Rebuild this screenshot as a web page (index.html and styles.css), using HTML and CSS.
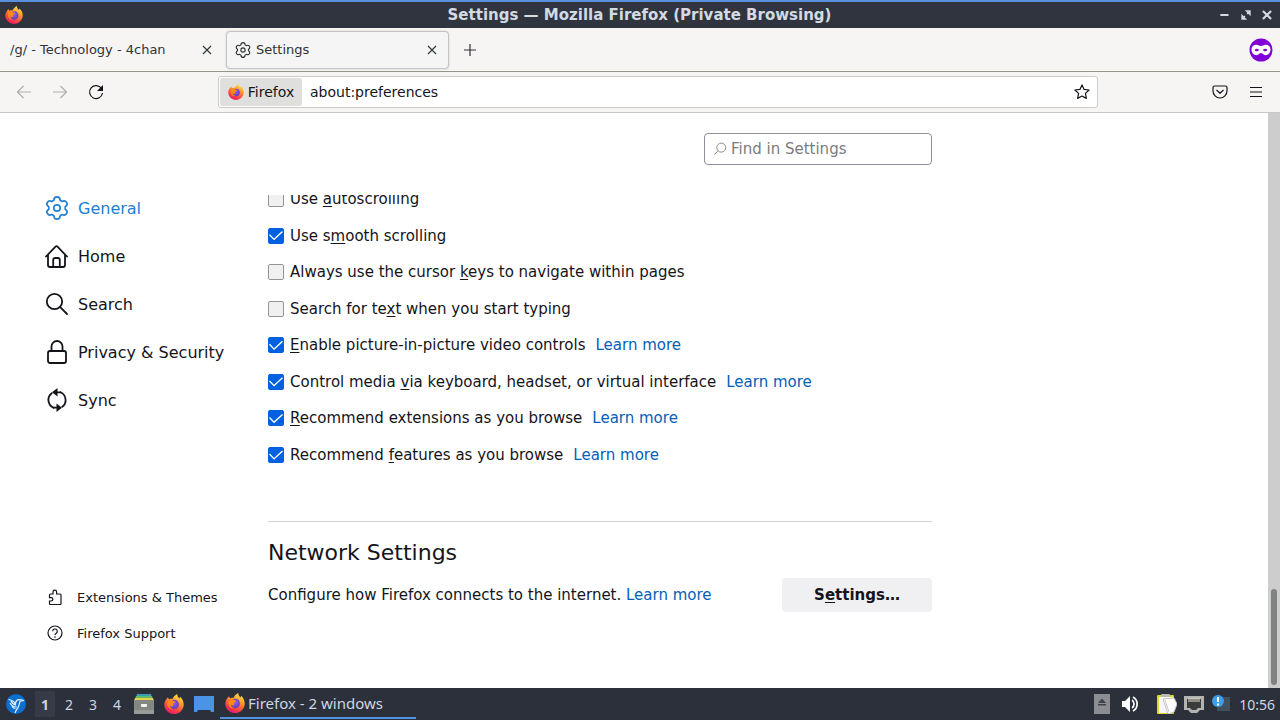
FILE: index.html
```html
<!DOCTYPE html>
<html lang="en">
<head>
  <meta charset="UTF-8" />
  <meta name="viewport" content="width=device-width, initial-scale=1.0"/>
  <title>Settings</title>
  <link rel="stylesheet" href="styles.css">
</head>
<body>

  <!-- shared icons -->
  <svg class="defs" width="0" height="0" aria-hidden="true">
    <defs>
      <linearGradient id="flame" x1="0.8" y1="0" x2="0.3" y2="1">
        <stop offset="0" stop-color="#fff04f"/>
        <stop offset="0.35" stop-color="#ffa02c"/>
        <stop offset="0.7" stop-color="#ff4a3d"/>
        <stop offset="1" stop-color="#e3156e"/>
      </linearGradient>
      <radialGradient id="globe" cx="0.5" cy="0.4" r="0.6">
        <stop offset="0" stop-color="#9059ff"/>
        <stop offset="1" stop-color="#5b3fb5"/>
      </radialGradient>
    </defs>
    <symbol id="firefox" viewBox="0 0 20 20">
      <path fill="url(#flame)" d="M4 3.200c.2 1 .6 1.700 1.200 2.100 1-.5 2.200-.6 3.200-.4C9.300 3 11 1 13.300 0c-.3 2 .9 3.200 2.300 4.400l.5-1.600c2.200 1.900 3.600 4.600 3.600 7.600 0 5.300-4.300 9.600-9.700 9.600S.3 15.700.3 10.400C.3 7.600 2.200 5 4 3.200z"/>
      <path fill="url(#globe)" d="M10.200 5.800c2.900 0 4.700 2 4.700 4.700 0 2.800-2.100 4.700-4.800 4.700s-4.700-2-4.700-4.400c0-2.800 2-5 4.800-5z"/>
      <path fill="#ff8a16" d="M4.700 6.500c1.500-.8 3.300-.6 4.500.5.600.5 1.700.4 2.300.7-.2 1-1.700 1.300-2.100 1.900-.3.800.2 2.100-.8 2.700-.9.500-2.200.1-2.900-.9.200 2.100 2 3.500 4.100 3.500-3.500.9-6.500-1.500-6.500-4.600 0-1.500.5-2.900 1.400-3.800z"/>
    </symbol>
    <symbol id="gear" viewBox="-12 -12 24 24">
      <g fill="none" stroke="currentColor" stroke-width="1.700" stroke-linejoin="round">
        <path d="M-3.100-7.700C-3-12.200 3-12.200 3.100-7.700L5.100-6.500C9.100-8.700 12.100-3.500 8.200-1.200L8.200 1.200C12.100 3.500 9.100 8.700 5.100 6.500L3.100 7.700C3 12.200-3 12.200-3.100 7.700L-5.100 6.500C-9.100 8.700-12.100 3.500-8.200 1.200L-8.200-1.200C-12.100-3.500-9.100-8.700-5.100-6.500Z"/>
        <circle r="3.200"/>
      </g>
    </symbol>
    <symbol id="close" viewBox="0 0 16 16">
      <path d="M4 4l8 8M12 4l-8 8" fill="none" stroke="currentColor" stroke-width="1.100"/>
    </symbol>
  </svg>

  <header class="titlebar">
    <svg class="app-icon"><use href="#firefox"/></svg>
    <h1>Settings — Mozilla Firefox (Private Browsing)</h1>
    <div class="window-buttons">
      <button aria-label="Minimize"><svg viewBox="0 0 12 12"><path d="M2 6h7" stroke="currentColor" stroke-width="1.700"/></svg></button>
      <button aria-label="Restore"><svg viewBox="0 0 12 12"><path d="M5 2h5v5zM2 5v5h5z" fill="currentColor"/><path d="M3 9l6-6" stroke="currentColor" stroke-width="1" stroke-dasharray="3 2.500"/></svg></button>
      <button aria-label="Close window"><svg viewBox="0 0 12 12"><path d="M2.500 2.500l7 7M9.500 2.500l-7 7" stroke="currentColor" stroke-width="1.900"/></svg></button>
    </div>
  </header>

  <div class="tabs">
    <div class="tab">
      <span>/g/ - Technology - 4chan</span>
      <button aria-label="Close tab"><svg><use href="#close"/></svg></button>
    </div>
    <div class="tab active">
      <svg><use href="#gear"/></svg>
      <span>Settings</span>
      <button aria-label="Close tab"><svg><use href="#close"/></svg></button>
    </div>
    <button class="new-tab" aria-label="New tab"><svg viewBox="0 0 16 16"><path d="M8 2v12M2 8h12" stroke="currentColor" stroke-width="1.200"/></svg></button>
    <svg class="private-icon" viewBox="0 0 24 24">
      <circle cx="12" cy="12" r="11.500" fill="#8000d7"/>
      <path fill="#fff" fill-rule="evenodd" d="M7.200 6.800c2 0 3.400 1.300 4.800 1.300s2.800-1.300 4.800-1.300c2.700 0 4.700 2 4.700 4.700 0 3.300-2.200 5.700-4.900 5.700-2.300 0-3.200-2.100-4.600-2.100s-2.300 2.100-4.600 2.100c-2.700 0-4.900-2.400-4.900-5.700 0-2.700 2-4.700 4.700-4.700zM5.500 12c1.200 1.800 3.400 1.800 4.600 0-1.200-1.600-3.400-1.600-4.600 0zm8.400 0c1.200 1.800 3.400 1.800 4.600 0-1.200-1.600-3.400-1.600-4.600 0z"/>
    </svg>
  </div>

  <div class="toolbar">
    <button disabled aria-label="Back"><svg viewBox="0 0 16 16"><path d="M7.500 2L1.500 8l6 6M1.500 8H15"/></svg></button>
    <button disabled aria-label="Forward"><svg viewBox="0 0 16 16"><path d="M8.500 2l6 6-6 6M14.500 8H1"/></svg></button>
    <button aria-label="Reload"><svg viewBox="0 0 16 16"><path d="M13.500 4.500A6.500 6.500 0 1 0 14.500 9"/><path class="solid" d="M15 1v6H9z"/></svg></button>
    <div class="urlbar">
      <button class="identity"><svg><use href="#firefox"/></svg>Firefox</button>
      <input type="text" value="about:preferences" aria-label="Address">
      <button aria-label="Bookmark this page"><svg viewBox="0 0 16 16"><path d="M8 .9l2.100 4.500 5 .6-3.700 3.400 1 5L8 12l-4.400 2.400 1-5L.9 6l5-.6z"/></svg></button>
    </div>
    <button aria-label="Save to Pocket"><svg viewBox="0 0 16 16"><path d="M2.500 2h11a1.500 1.500 0 0 1 1.500 1.500V7A7 7 0 0 1 1 7V3.500A1.500 1.500 0 0 1 2.500 2zM4.500 6L8 9.300 11.500 6"/></svg></button>
    <button aria-label="Menu"><svg viewBox="0 0 16 16"><path d="M2 3.500h12M2 8h12M2 12.500h12"/></svg></button>
  </div>

  <div class="page">
    <aside class="sidebar">
      <nav class="categories">
        <a href="#general" class="selected"><svg><use href="#gear"/></svg>General</a>
        <a href="#home"><svg viewBox="0 0 24 24"><path d="M1 12.500L10.500 2.600a1.500 1.500 0 0 1 2 0l9.500 9.900M3 10.500V21A2 2 0 0 0 5 23h13a2 2 0 0 0 2-2V10.500M8.200 23v-7a2 2 0 0 1 2-2h2.600a2 2 0 0 1 2 2v7"/></svg>Home</a>
        <a href="#search"><svg viewBox="0 0 24 24"><circle cx="9.500" cy="9.500" r="7.700"/><path d="M15.200 15.200L22 22"/></svg>Search</a>
        <a href="#privacy"><svg viewBox="0 0 24 24"><rect x="3" y="11" width="18" height="12" rx="2"/><path d="M6.500 11V6.500a5.500 5.500 0 0 1 11 0V11"/></svg>Privacy &amp; Security</a>
        <a href="#sync"><svg viewBox="0 0 24 24"><path d="M6.700 5.200A8.500 8.500 0 0 0 8.500 19.700M17.300 18.800A8.500 8.500 0 0 0 15.500 4.300"/><path class="solid" d="M12.500 0v8.600L7 4.300zM11.500 15.400V24l5.500-4.300z"/><path d="M12 4.300c1.500 0 2.500 0 3.500.1M12 19.700c-1.500 0-2.500 0-3.500-.1"/></svg>Sync</a>
      </nav>
      <nav class="footer-links">
        <a href="#addons"><svg viewBox="0 0 16 16"><path d="M3.500 5H6V3a1.800 1.800 0 0 1 3.600 0v2H13a1 1 0 0 1 1 1v8.500a1 1 0 0 1-1 1H3.500a1 1 0 0 1-1-1V12h1.700a1.600 1.600 0 0 0 0-3.300H2.500V6a1 1 0 0 1 1-1z"/></svg>Extensions &amp; Themes</a>
        <a href="#support"><svg viewBox="0 0 16 16"><circle cx="8" cy="8" r="7"/><path d="M5.700 6.300a2.300 2.300 0 1 1 3.600 1.900C8.400 8.800 8 9.200 8 10.100M8 11.300v1.400"/></svg>Firefox Support</a>
      </nav>
    </aside>

    <main class="main">
      <div class="search-row">
        <label class="search-box">
          <svg viewBox="0 0 16 16"><circle cx="8.800" cy="6" r="4.800"/><path d="M5.300 9.500L1.300 13.500"/></svg>
          <input type="search" placeholder="Find in Settings" aria-label="Find in Settings">
        </label>
      </div>

      <div class="pane">
        <div class="options">
          <div class="option"><input type="checkbox" id="autoscroll"><label for="autoscroll">Use <u>a</u>utoscrolling</label></div>
          <div class="option"><input type="checkbox" id="smooth" checked><label for="smooth">Use s<u>m</u>ooth scrolling</label></div>
          <div class="option"><input type="checkbox" id="cursor"><label for="cursor">Always use the cursor <u>k</u>eys to navigate within pages</label></div>
          <div class="option"><input type="checkbox" id="typing"><label for="typing">Search for te<u>x</u>t when you start typing</label></div>
          <div class="option"><input type="checkbox" id="pip" checked><label for="pip"><u>E</u>nable picture-in-picture video controls</label><a href="#pip-help">Learn more</a></div>
          <div class="option"><input type="checkbox" id="media" checked><label for="media">Control media <u>v</u>ia keyboard, headset, or virtual interface</label><a href="#media-help">Learn more</a></div>
          <div class="option"><input type="checkbox" id="extensions" checked><label for="extensions"><u>R</u>ecommend extensions as you browse</label><a href="#extensions-help">Learn more</a></div>
          <div class="option"><input type="checkbox" id="features" checked><label for="features">Recommend <u>f</u>eatures as you browse</label><a href="#features-help">Learn more</a></div>
        </div>

        <section class="network">
          <h2>Network Settings</h2>
          <div class="network-row">
            <p>Configure how Firefox connects to the internet. <a href="#network-help">Learn more</a></p>
            <button>S<u>e</u>ttings…</button>
          </div>
        </section>
      </div>
    </main>

    <div class="scrollbar"><div class="thumb"></div></div>
  </div>

  <footer class="taskbar">
    <button class="start" aria-label="Menu">
      <svg viewBox="0 0 20 20"><circle cx="10" cy="10" r="10" fill="#0b6fd0"/><path d="M2.500 5.500c3 .3 5.500 2 7 4.500 0-2.700 1.500-4.500 4-4.300l4.500.8-4 .7c-.7 3.800-1.500 6.500-3.700 8.800L9 19M4 9c1.800 3 4 4.200 6.800 4M6 12.500c.8 1.300 2 2 3.500 2M5 7c1.200 2.500 3 3.800 5 4" fill="none" stroke="#e6f2ff" stroke-width="1.200"/></svg>
    </button>
    <div class="desktops">
      <button class="current">1</button>
      <button>2</button>
      <button>3</button>
      <button>4</button>
    </div>
    <div class="launchers">
      <button aria-label="Files"><svg viewBox="0 0 20 20"><path d="M3 0h14l1 4H2z" fill="#3b9bb0"/><path d="M2 2h16l1 4H1z" fill="#62bd6a"/><path d="M1 4h18l1 3H0z" fill="#e8cf52"/><rect y="6" width="20" height="14" rx="1" fill="#858783"/><path d="M0 16h20v3a1 1 0 0 1-1 1H1a1 1 0 0 1-1-1z" fill="#999b98"/><rect x="7" y="10" width="6" height="3" rx="1" fill="#f4f4f4"/></svg></button>
      <button aria-label="Firefox"><svg><use href="#firefox"/></svg></button>
      <button aria-label="Show desktop"><svg viewBox="0 0 20 20"><path d="M0 2h20v16h-3l-1-2H4l-1 2H0z" fill="#4b93e6"/></svg></button>
    </div>
    <button class="task"><svg><use href="#firefox"/></svg>Firefox - 2 windows</button>
    <div class="tray">
      <svg class="eject" viewBox="0 0 16 20"><rect width="16" height="20" fill="#8b8d90"/><path d="M8 4.500l4 4.500H4zM4 10h8v1.500H4z" fill="#3e424a"/></svg>
      <svg class="volume" viewBox="0 0 20 20"><path d="M2 7h3l5-5v16l-5-5H2z" fill="#fff"/><path d="M12 6c2.700 2 2.700 6 0 8M13 3c5.500 3 5.500 11 0 14" fill="none" stroke="#fff" stroke-width="1.700"/></svg>
      <svg viewBox="0 0 20 20"><rect x="0" y="1" width="17" height="19" rx="1" fill="#ddd72a"/><rect x="2" y="3" width="14" height="16" fill="#f6f6f6"/><rect x="4" y="0" width="9" height="3" rx="1" fill="#b9bbb8"/><path d="M6 5l11-1 3 6-3 8-6 2z" fill="#fff" stroke="#c4c4c4"/><path d="M8 6l4 12" stroke="#ccc"/></svg>
      <svg viewBox="0 0 20 20"><path d="M0 2h20v14h-4l-3 3H7l-3-3H0z" fill="#b2b4b1"/><path d="M3 5h14v9h-3l-2 2H8l-2-2H3z" fill="#3a3c3b"/><path d="M5 4v4M7 4v4M9 4v4M11 4v4M13 4v4M15 4v4" stroke="#e3dfd2"/></svg>
      <svg viewBox="0 0 20 20"><rect x="6" y="3" width="13" height="14" fill="#42505b"/><circle cx="7" cy="7" r="6" fill="#3e9fe8"/><path d="M7 3v5M7 9.500v2" stroke="#fff" stroke-width="2"/></svg>
      <time>10:56</time>
    </div>
  </footer>

</body>
</html>
```
FILE: styles.css
```css
* {
  margin: 0;
  padding: 0;
  box-sizing: border-box;
}

body {
  display: flex;
  flex-direction: column;
  height: 100vh;
  overflow: hidden;
  font-family: 'DejaVu Sans', Verdana, sans-serif;
  font-size: 15px;
  color: #15141a;
  background: #ffffff;
}

button,
input {
  font: inherit;
  color: inherit;
  border: none;
  background: none;
}

button {
  display: flex;
  align-items: center;
  justify-content: center;
}

a {
  color: #0560b8;
  text-decoration: none;
}

svg {
  flex: none;
  width: 16px;
  height: 16px;
}

.defs {
  position: absolute;
  width: 0;
  height: 0;
}

u {
  text-underline-offset: 2px;
}

/* window title */
.titlebar {
  display: flex;
  align-items: center;
  height: 28px;
  padding: 0 6px 0 5px;
  border-top: 2px solid #5a8fdc;
  background: #2f343f;
  color: #d3dae3;
}

.titlebar .app-icon {
  width: 18px;
  height: 18px;
}

.titlebar h1 {
  flex: 1;
  padding-left: 38px;
  text-align: center;
  font-size: 15px;
  line-height: 26px;
}

.window-buttons {
  display: flex;
  gap: 7px;
}

.window-buttons svg {
  width: 14px;
  height: 14px;
}

/* tab strip */
.tabs {
  display: flex;
  align-items: center;
  height: 44px;
  border-bottom: 1px solid #94958c;
  background: #f6f5f4;
  font-size: 13px;
  color: #2e3436;
}

.tab {
  display: flex;
  align-items: center;
  gap: 5px;
  width: 223px;
  height: 38px;
  padding: 0 8px;
  border: 1px solid transparent;
  border-radius: 4px;
}

.tab span {
  flex: 1;
  white-space: nowrap;
}

.tab:first-child {
  width: 225px;
  padding-left: 9px;
  margin-right: 1px;
}

.tab:first-child button {
  margin-right: 1px;
}

.tab.active {
  border-color: #c3c3c8;
  box-shadow: 0 0 2px rgba(0, 0, 0, 0.2);
  background: #f6f5f5;
}

.new-tab {
  width: 42px;
}

.private-icon {
  width: 24px;
  height: 24px;
  margin-left: auto;
  margin-right: 7px;
}

/* navigation bar */
.toolbar {
  display: flex;
  align-items: center;
  height: 41px;
  padding: 0 6px;
  border-bottom: 1px solid #c8c8c6;
  background: #f6f5f4;
  font-size: 14px;
}

.toolbar button {
  width: 36px;
  height: 32px;
}

.toolbar button:disabled {
  color: #aeafae;
}

.toolbar path {
  fill: none;
  stroke: currentColor;
  stroke-width: 1.2;
  stroke-linejoin: round;
}

.toolbar .solid {
  fill: currentColor;
  stroke: none;
}

.urlbar {
  display: flex;
  align-items: center;
  flex: 1;
  height: 32px;
  margin: 0 104px;
  border: 1px solid #cbcbc9;
  border-radius: 3px;
  background: #ffffff;
}

.urlbar button {
  width: 30px;
}

.urlbar .identity {
  gap: 4px;
  width: 82px;
  height: 28px;
  margin-left: 1px;
  border-radius: 3px;
  background: #dfdfde;
}

.urlbar input {
  flex: 1;
  min-width: 0;
  padding: 0 8px;
  outline: none;
}

/* settings page */
.page {
  display: flex;
  flex: 1;
  min-height: 0;
}

.sidebar {
  display: flex;
  flex-direction: column;
  justify-content: space-between;
  flex: 0 0 268px;
  padding: 71px 0 37px 45px;
}

.sidebar a {
  display: flex;
  align-items: center;
  color: #15141a;
}

.sidebar svg {
  fill: none;
  stroke: currentColor;
}

.sidebar .solid {
  fill: currentColor;
  stroke: none;
}

.categories a {
  gap: 9px;
  height: 48px;
  font-size: 16px;
}

.categories svg {
  width: 24px;
  height: 24px;
  stroke-width: 1.8;
  stroke-linecap: round;
}

.categories .selected {
  color: #2180d8;
}

.footer-links {
  padding-left: 2px;
}

.footer-links a {
  gap: 14px;
  height: 36px;
  font-size: 13px;
}

.footer-links svg {
  stroke-width: 1.2;
}

.main {
  display: flex;
  flex-direction: column;
  flex: 0 1 664px;
}

.search-row {
  display: flex;
  justify-content: flex-end;
  padding: 20px 0 30px;
}

.search-box {
  display: flex;
  align-items: center;
  gap: 3px;
  width: 228px;
  height: 32px;
  padding: 0 8px;
  border: 1px solid #8f8f9d;
  border-radius: 4px;
}

.search-box svg {
  width: 15px;
  height: 15px;
  fill: none;
  stroke: #85858c;
}

.search-box input {
  flex: 1;
  min-width: 0;
  outline: none;
}

.search-box input::placeholder {
  color: #7b7b80;
}

/* the pane is scrolled to its end, so rows are cut at the top */
.pane {
  display: flex;
  flex-direction: column;
  justify-content: flex-end;
  flex: 1;
  min-height: 0;
  padding-bottom: 76px;
  overflow: hidden;
}

.options {
  display: flex;
  flex-direction: column;
  flex: none;
  justify-content: space-between;
  height: 272px;
}

.option {
  display: flex;
  align-items: center;
  height: 16px;
  line-height: 20px;
  white-space: nowrap;
}

.option label {
  margin: 0 10px 0 6px;
}

.option input {
  appearance: none;
  width: 16px;
  height: 16px;
  border: 1px solid #949498;
  border-radius: 2px;
  background: #f0f0f1;
}

.option input:checked {
  border-color: #0061e0;
  background: #0061e0;
}

.option input:checked::before {
  content: '';
  display: block;
  width: 14px;
  height: 14px;
  background: #ffffff;
  clip-path: polygon(0 47%, 7% 40%, 36% 71%, 93% 18%, 100% 25%, 36% 84%);
}

.network {
  flex: none;
  margin-top: 58px;
  border-top: 1px solid #d0d3d4;
}

.network h2 {
  padding: 18px 0 12px;
  font-size: 22px;
  line-height: 26px;
  font-weight: normal;
}

.network-row {
  display: flex;
  align-items: center;
  justify-content: space-between;
}

.network-row button {
  display: block;
  width: 150px;
  height: 34px;
  border-radius: 4px;
  background: #f0f0f2;
  font-weight: bold;
}

.scrollbar {
  display: flex;
  align-items: flex-end;
  justify-content: center;
  width: 12px;
  margin-left: auto;
  padding-bottom: 3px;
  background: #cdcdcd;
}

.thumb {
  width: 6px;
  height: 96px;
  border-radius: 3px;
  background: #7f8382;
}

/* desktop panel */
.taskbar {
  display: flex;
  align-items: center;
  height: 32px;
  padding: 0 5px 0 6px;
  background: #2b303b;
  color: #cfd6e2;
  font-family: 'Noto Sans', 'Open Sans', sans-serif;
  font-size: 14px;
}

.taskbar svg {
  width: 20px;
  height: 20px;
}

.desktops {
  display: flex;
  margin-left: 7px;
}

.desktops button {
  width: 24px;
  height: 26px;
}

.desktops .current {
  width: 20px;
  margin: 0 2px;
  background: #363b47;
  font-weight: bold;
}

.launchers {
  display: flex;
  gap: 10px;
  margin: 0 6px 0 5px;
}

.task {
  justify-content: flex-start;
  gap: 3px;
  width: 196px;
  height: 30px;
  padding-left: 5px;
  border-bottom: 2px solid #5294e2;
  font-size: 15px;
}

.tray {
  display: flex;
  align-items: center;
  gap: 7px;
  margin-left: auto;
}

.tray .eject {
  width: 16px;
  margin-right: 3px;
}

.tray .volume {
  margin-right: 10px;
}

.tray time {
  width: 37px;
  text-align: right;
}
```
